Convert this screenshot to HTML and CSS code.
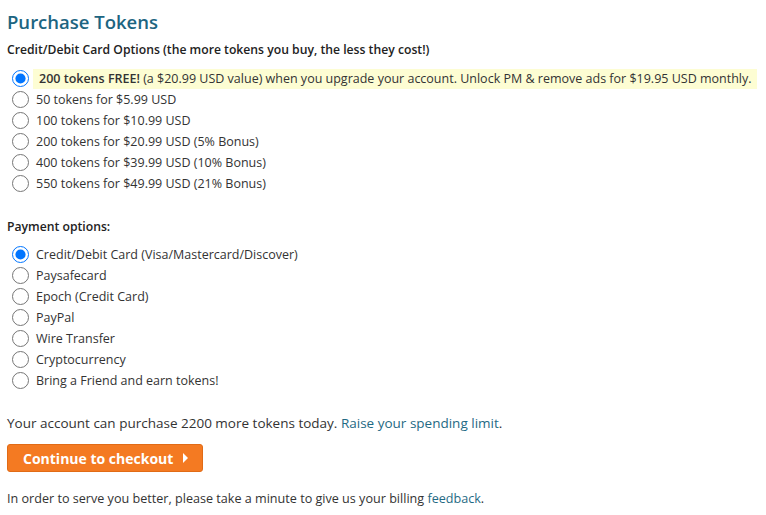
FILE: index.html
```html
<!DOCTYPE html>
<html lang="en">
<head>
  <meta charset="UTF-8">
  <meta name="viewport" content="width=device-width, initial-scale=1.0">
  <title>Purchase Tokens</title>
  <link rel="stylesheet" href="styles.css">
</head>
<body>
  <div class="page">
    <h1 class="title">Purchase Tokens</h1>

    <!-- Token packages -->
    <h2 class="group-title">Credit/Debit Card Options (the more tokens you buy, the less they cost!)</h2>
    <ul class="option-list">
      <li class="option">
        <input type="radio" name="package" id="pkg-free" checked>
        <label for="pkg-free" class="promo"><b>200 tokens FREE!</b> (a $20.99 USD value) when you upgrade your account. Unlock PM &amp; remove ads for $19.95 USD monthly.</label>
      </li>
      <li class="option">
        <input type="radio" name="package" id="pkg-50">
        <label for="pkg-50">50 tokens for $5.99 USD</label>
      </li>
      <li class="option">
        <input type="radio" name="package" id="pkg-100">
        <label for="pkg-100">100 tokens for $10.99 USD</label>
      </li>
      <li class="option">
        <input type="radio" name="package" id="pkg-200">
        <label for="pkg-200">200 tokens for $20.99 USD (5% Bonus)</label>
      </li>
      <li class="option">
        <input type="radio" name="package" id="pkg-400">
        <label for="pkg-400">400 tokens for $39.99 USD (10% Bonus)</label>
      </li>
      <li class="option">
        <input type="radio" name="package" id="pkg-550">
        <label for="pkg-550">550 tokens for $49.99 USD (21% Bonus)</label>
      </li>
    </ul>

    <!-- Payment methods -->
    <h2 class="group-title payment-title">Payment options:</h2>
    <ul class="option-list">
      <li class="option">
        <input type="radio" name="method" id="pay-card" checked>
        <label for="pay-card">Credit/Debit Card (Visa/Mastercard/Discover)</label>
      </li>
      <li class="option">
        <input type="radio" name="method" id="pay-psc">
        <label for="pay-psc">Paysafecard</label>
      </li>
      <li class="option">
        <input type="radio" name="method" id="pay-epoch">
        <label for="pay-epoch">Epoch (Credit Card)</label>
      </li>
      <li class="option">
        <input type="radio" name="method" id="pay-paypal">
        <label for="pay-paypal">PayPal</label>
      </li>
      <li class="option">
        <input type="radio" name="method" id="pay-wire">
        <label for="pay-wire">Wire Transfer</label>
      </li>
      <li class="option">
        <input type="radio" name="method" id="pay-crypto">
        <label for="pay-crypto">Cryptocurrency</label>
      </li>
      <li class="option">
        <input type="radio" name="method" id="pay-friend">
        <label for="pay-friend">Bring a Friend and earn tokens!</label>
      </li>
    </ul>

    <p class="limit">Your account can purchase 2200 more tokens today. <a href="#">Raise your spending limit</a>.</p>

    <button class="checkout" type="button">Continue to checkout <span class="arrow"></span></button>

    <p class="feedback">In order to serve you better, please take a minute to give us your billing <a href="#">feedback</a>.</p>
  </div>
</body>
</html>
```

FILE: styles.css
```css
body {
  margin: 0;
  padding: 0;
  font-family: "Open Sans", "Noto Sans", sans-serif;
  font-size: 12.5px;
  color: #333;
  background-color: #fff;
}
.page {
  padding: 0 7px;
}
.title {
  margin: 10px 0 0;
  font-size: 18.5px;
  line-height: 24px;
  font-weight: 600;
  color: #1d6581;
}
.group-title {
  margin: 7px 0 0;
  font-size: 12.2px;
  line-height: 18px;
  font-weight: 600;
  color: #222;
}
.payment-title {
  margin-top: 24px;
}
.option-list {
  list-style-type: none;
  margin: 9px 0 0;
  padding: 0;
}
.payment-title + .option-list {
  margin-top: 8px;
}
.option {
  display: flex;
  align-items: center;
  height: 21px;
}
.option input {
  width: 17px;
  height: 17px;
  margin: 0 4px 0 5px;
  flex-shrink: 0;
}
.option label {
  padding: 0 3px;
  line-height: 20px;
}
.option .promo {
  padding: 0 5px 0 6px;
  background-color: #fdfdd3;
}
.promo b {
  font-weight: 600;
}
a {
  color: #1f6a84;
  text-decoration: none;
}
.limit {
  margin: 23px 0 0;
  font-size: 13.5px;
  line-height: 18px;
}
.checkout {
  display: flex;
  align-items: center;
  margin-top: 12px;
  height: 28px;
  width: 196px;
  padding: 0 0 0 15px;
  border: 1px solid #e16b16;
  border-radius: 3px;
  background-color: #f47a22;
  color: #fff;
  font-family: inherit;
  font-size: 14px;
  font-weight: 700;
  cursor: pointer;
}
.arrow {
  display: inline-block;
  margin-left: 10px;
  border-left: 5px solid #fff;
  border-top: 5px solid transparent;
  border-bottom: 5px solid transparent;
}
.feedback {
  margin: 18px 0 0;
  font-size: 12.6px;
  line-height: 18px;
}
```
